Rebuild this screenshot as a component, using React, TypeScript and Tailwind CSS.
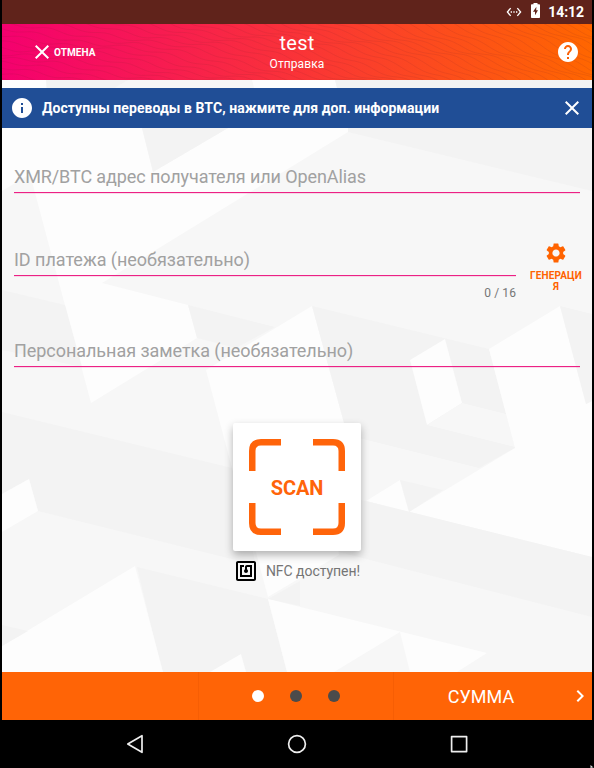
import React from "react";
import {
  MdChevronRight,
  MdClose,
  MdHelp,
  MdInfo,
  MdNfc,
  MdSettings,
  MdSettingsEthernet,
} from "react-icons/md";

const WHITE = "#fdfdfd";
const MID = "#f7f7f7";
const DARK = "#f3f3f3";

const facets: [string, string][] = [
  [WHITE, "2,80 46,80 58,128 2,128"],
  [DARK, "46,80 128,80 49,126"],
  [MID, "128,80 252,80 260,110 228,128 141,128"],
  [WHITE, "252,80 335,80 348,128 228,128 260,110"],
  [DARK, "335,80 592,80 592,191 348,132"],
  [WHITE, "2,128 142,128 153,172 228,128 348,128 348,132 102,283 188,305 197,338 91,403 30,174 2,191"],
  [DARK, "142,128 228,128 153,172"],
  [DARK, "2,290 65,305 82,367 2,350"],
  [DARK, "188,305 275,327 236,348 197,338"],
  [WHITE, "312,306 206,370 232,468 255,551 370,551 344,423"],
  [DARK, "312,306 489,349 515,448 479,468 355,437 344,423"],
  [WHITE, "445,339 410,360 427,425 462,403"],
  [MID, "462,403 506,414 515,447 427,425"],
  [WHITE, "560,306 489,349 515,448 409,512 592,557 592,401 586,404"],
  [DARK, "560,306 592,314 592,401 586,404"],
  [WHITE, "400,480 366,501 409,512"],
  [DARK, "400,480 443,490 409,512"],
  [DARK, "2,412 232,468 256,565 38,511 29,479 2,494"],
  [WHITE, "2,494 29,479 38,511 2,532"],
  [DARK, "340,495 366,501 592,557 592,617 339,552"],
  [WHITE, "254,545 337,545 339,555 268,597"],
  [DARK, "137,567 268,599 287,672 162,672"],
  [WHITE, "135,566 163,672 2,672 2,646"],
  [DARK, "2,625 28,631 2,646"],
  [WHITE, "241,654 246,672 210,672"],
  [DARK, "268,599 300,581 300,606"],
  [WHITE, "268,599 487,653 457,672 287,672"],
  [MID, "400,632 410,672 334,672"],
];

function Facets() {
  return (
    <svg className="absolute inset-0 h-full w-full" viewBox="2 80 590 592" preserveAspectRatio="none">
      <rect x="2" y="80" width="590" height="592" fill={MID} />
      {facets.map(([fill, points], i) => (
        <polygon key={i} points={points} fill={fill} />
      ))}
    </svg>
  );
}

// Each line steepens to the right and ripples out of phase with its neighbour.
function wave(row: number) {
  let d = "";
  for (let x = -10; x <= 600; x += 3) {
    const y =
      row * 5.5 -
      175 +
      x * 0.1 +
      x * x * 0.00032 +
      1.5 * Math.sin(x / 7 + row * 1.9) +
      1.6 * Math.sin(x / 23 + row * 0.9);
    d += (d ? "L" : "M") + x + " " + y.toFixed(1);
  }
  return d;
}

function HeaderTexture() {
  return (
    <svg className="absolute inset-0 h-full w-full" viewBox="0 0 590 56">
      <g fill="none" stroke="#7a2030" strokeOpacity="0.13" strokeWidth="0.9">
        {Array.from({ length: 46 }, (_, i) => (
          <path key={i} d={wave(i)} />
        ))}
      </g>
    </svg>
  );
}

function Field({ label, tracking = "tracking-normal" }: { label: string; tracking?: string }) {
  return (
    <div
      className={`h-[30px] border-b border-[#ec2185] text-[18px] leading-[28px] whitespace-nowrap text-[#a1a1a1] shadow-[0_1px_0_rgba(236,33,133,0.15)] ${tracking}`}
    >
      {label}
    </div>
  );
}

export default function App() {
  return (
    <div className="relative flex h-[768px] w-[594px] flex-col overflow-hidden bg-black px-[2px] font-['Roboto',sans-serif]">
      <div className="flex h-6 shrink-0 items-center justify-end bg-[#60231b] pr-2 text-white">
        <MdSettingsEthernet className="mr-[9px] h-4 w-4" />
        <svg className="mr-[8px] mb-[3px] h-[15px] w-[9px]" viewBox="0 0 9 15">
          <path
            fill="#fff"
            fillRule="evenodd"
            d="M2.5 0H6.5V1.3H8.2Q9 1.3 9 2.1V14.2Q9 15 8.2 15H.8Q0 15 0 14.2V2.1Q0 1.3 .8 1.3H2.5ZM5.4 3.8L2 8.8H4V12.2L7 7.2H5.2Z"
          />
        </svg>
        <span className="text-[14px] leading-6 font-bold tracking-[-0.05px]">14:12</span>
      </div>

      <header className="relative h-14 shrink-0 bg-linear-to-r/srgb from-[#f4006f] to-[#ff6600] text-white">
        <HeaderTexture />
        <div className="relative grid h-full grid-cols-3 items-center">
          <div className="flex items-center pl-[28px]">
            <MdClose className="h-6 w-6" />
            <span className="text-[10px] font-bold tracking-[0.1px]">ОТМЕНА</span>
          </div>
          <div className="text-center">
            <div className="text-[20px] leading-6 tracking-[0.2px]">test</div>
            <div className="text-[12px] leading-[18px] tracking-[0.1px]">Отправка</div>
          </div>
          <MdHelp className="mr-3 h-6 w-6 justify-self-end" />
        </div>
      </header>

      <main className="relative h-[592px] shrink-0 overflow-hidden">
        <Facets />
        <div className="relative flex flex-col pt-2">
          <div className="flex h-10 items-center bg-[#204e96] pr-2 pl-2 text-white">
            <MdInfo className="h-6 w-6" />
            <span className="ml-2 flex-1 text-[14px] font-bold tracking-[0.06px] whitespace-nowrap">
              Доступны переводы в BTC, нажмите для доп. информации
            </span>
            <MdClose className="h-6 w-6" />
          </div>

          <div className="flex flex-col px-3 pt-[35px]">
            <Field label="XMR/BTC адрес получателя или OpenAlias" tracking="tracking-[-0.1px]" />
            <div className="flex h-[144px] pt-[45px]">
              <div className="w-[502px] shrink-0 pt-[8px]">
                <Field label="ID платежа (необязательно)" tracking="tracking-[-0.03px]" />
                <div className="pt-2 text-right text-[12px] leading-[18px] tracking-[0.1px] text-[#767676]">0 / 16</div>
              </div>
              <div className="ml-3 flex w-14 shrink-0 flex-col items-center pt-[3px] text-[#ff6300]">
                <MdSettings className="h-6 w-6" />
                <div className="mt-[5px] text-center text-[10px] leading-[11px] font-bold tracking-[0.15px]">
                  ГЕНЕРАЦИ
                  <br />Я
                </div>
              </div>
            </div>
            <Field label="Персональная заметка (необязательно)" tracking="tracking-[-0.05px]" />
          </div>

          <div className="mt-14 flex flex-col items-center">
            <div className="h-32 w-32 rounded-[2px] bg-white p-4 shadow-[0_4px_8px_rgba(0,0,0,0.3)]">
              <div className="relative flex h-24 w-24 items-center justify-center">
                <svg className="absolute inset-0 h-24 w-24" viewBox="0 0 96 96" fill="none" stroke="#ff640a" strokeWidth="6.5">
                  <path d="M3.25 32V12Q3.25 3.25 12 3.25H32M64 3.25H84Q92.75 3.25 92.75 12V32M92.75 64V84Q92.75 92.75 84 92.75H64M32 92.75H12Q3.25 92.75 3.25 84V64" />
                </svg>
                <span className="pt-px text-[20px] font-bold tracking-[-0.1px] text-[#ff640a]">SCAN</span>
              </div>
            </div>
            <div className="mt-2 flex items-center text-[14px] tracking-[-0.04px] text-[#757575]">
              <MdNfc className="mr-2 h-6 w-6 text-black" />
              NFC доступен!
            </div>
          </div>
        </div>
      </main>

      <div className="grid h-12 shrink-0 grid-cols-[197px_195px_198px] bg-[#ff6406] text-white">
        <div className="border-r border-[#f65e04]" />
        <div className="flex items-center justify-center gap-[26px] border-r border-[#f65e04]">
          <div className="h-3 w-3 rounded-full bg-white" />
          <div className="h-3 w-3 rounded-full bg-[#4b4b4b]" />
          <div className="h-3 w-3 rounded-full bg-[#4b4b4b]" />
        </div>
        <div className="flex items-center">
          <span className="w-[174px] text-center text-[18px]">СУММА</span>
          <MdChevronRight className="h-6 w-6" />
        </div>
      </div>

      <nav className="flex h-12 shrink-0 items-center justify-center gap-[138px]">
        <svg className="h-6 w-6" viewBox="0 0 24 24" fill="none" stroke="#eee" strokeWidth="1.7" strokeLinejoin="round">
          <path d="M19 3.7V20.3L4.8 12Z" />
        </svg>
        <svg className="h-6 w-6" viewBox="0 0 24 24" fill="none" stroke="#eee" strokeWidth="1.7">
          <circle cx="12" cy="12" r="8.4" />
        </svg>
        <svg className="h-6 w-6" viewBox="0 0 24 24" fill="none" stroke="#eee" strokeWidth="1.7" strokeLinejoin="round">
          <rect x="4.6" y="4.6" width="15" height="15" />
        </svg>
      </nav>
      <svg className="absolute right-0 bottom-0 h-[3px] w-[4px]" viewBox="0 0 4 3">
        <path d="M.5 0L3.5 2.5H1.5V3H.5Z" fill="#ddd" />
      </svg>
    </div>
  );
}
